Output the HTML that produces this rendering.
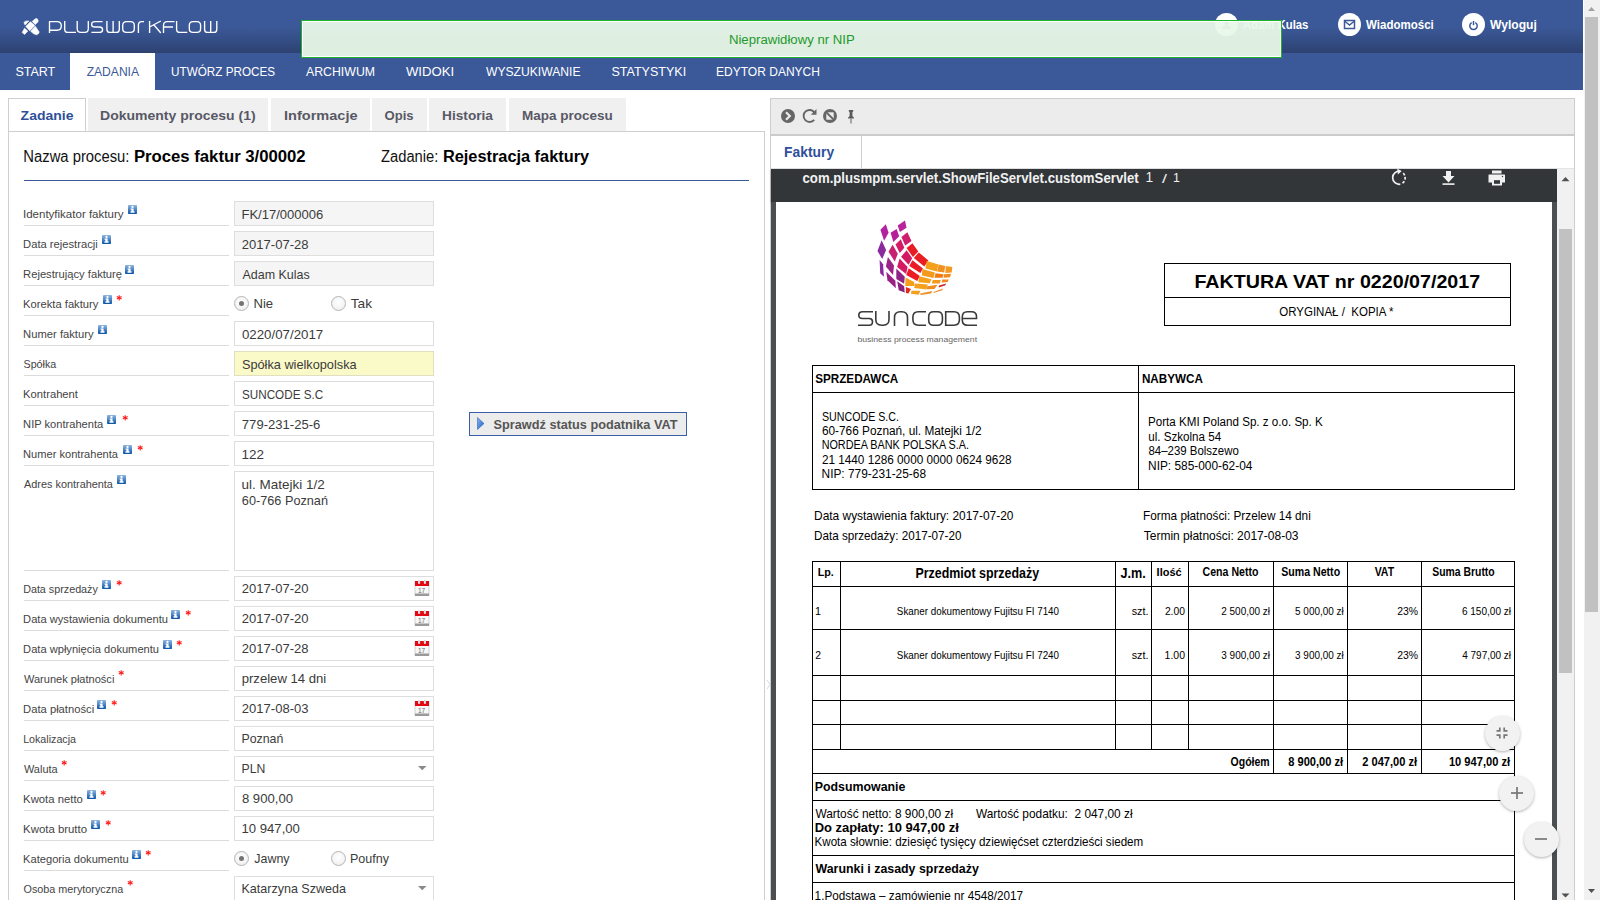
<!DOCTYPE html><html><head><meta charset="utf-8"><title>PlusWorkflow</title>
<style>
html,body{margin:0;padding:0;}
body{width:1600px;height:900px;overflow:hidden;position:relative;background:#fff;font-family:"Liberation Sans",sans-serif;}
.t{position:absolute;white-space:pre;transform-origin:0 0;}
div{box-sizing:border-box;}
svg{position:absolute;overflow:visible;}
text{font-family:"Liberation Sans",sans-serif;}
</style></head><body>

<div style="position:absolute;left:0px;top:0px;width:1583px;height:53px;background:linear-gradient(to bottom,#3b5998 0px,#3b5998 27px,#2d4272 53px);"></div>
<div style="position:absolute;left:0px;top:53px;width:1583px;height:37px;background:#3b5998;"></div>
<div style="position:absolute;left:70px;top:53px;width:85px;height:37px;background:#fff;"></div>
<svg style="left:0;top:0" width="260" height="53">
<g fill="#fff" stroke="#fff" stroke-width="0.6" stroke-linejoin="round">
<path d="M23.9 22.4 L25.5 21.2 L28.8 20.9 L25.1 25.1Z"/>
<path d="M32.2 21.4 L35.3 18.8 L37.1 18.6 L38.2 20.6 L37.9 22.1 L35.2 24.5Z"/>
<path d="M25.8 26.4 L30.4 21.8 L34.9 25.6 L29.8 30.8Z"/>
<path d="M22.2 32.6 L24.5 28.2 L27.8 31.1 L24.6 34.4Z"/>
<path d="M30.7 31.3 L35.3 26.3 L39.2 31.9 L38.5 33.7 L36.5 34.8 L33.6 33.7Z"/>
</g>
<g stroke="#fff" stroke-width="1.35" fill="none" stroke-linecap="butt" stroke-linejoin="round">
<path d="M49.5 33 V21.6 H57 Q61.3 21.6 61.3 25.8 V26 Q61.3 30.2 57 30.2 H49.5"/>
<path d="M64.7 21 V29.2 Q64.7 32.4 68 32.4 H76"/>
<path d="M77.2 21 V28.8 Q77.2 32.4 80.8 32.4 H84.8 Q88.3 32.4 88.3 28.8 V21"/>
<path d="M102.5 21.6 H95 Q91.6 21.6 91.6 24.4 Q91.6 27 95 27 H99.3 Q102.6 27 102.6 29.7 Q102.6 32.4 99.3 32.4 H91.4"/>
<path d="M106.9 21 V29.2 Q106.9 32.4 110 32.4 H116.2 Q119.3 32.4 119.3 29.2 V21 M113.1 21 V32.4"/>
<path d="M126.5 21.6 H130.5 Q134.3 21.6 134.3 25.5 V28.5 Q134.3 32.4 130.5 32.4 H126.5 Q122.7 32.4 122.7 28.5 V25.5 Q122.7 21.6 126.5 21.6Z"/>
<path d="M138.4 33 V25.2 Q138.4 21.6 141.8 21.6 H144"/>
<path d="M149.6 21 V33 M149.6 27 L160.8 21 M153.8 24.8 L160.8 33"/>
<path d="M163.5 33 V25.5 Q163.5 21.6 167.3 21.6 H174.5 M163.5 27 H173"/>
<path d="M176.6 21 V29.2 Q176.6 32.4 180 32.4 H187.3"/>
<path d="M193 21.6 H196.8 Q200.6 21.6 200.6 25.5 V28.5 Q200.6 32.4 196.8 32.4 H193 Q189.3 32.4 189.3 28.5 V25.5 Q189.3 21.6 193 21.6Z"/>
<path d="M204.6 21 V29.2 Q204.6 32.4 207.6 32.4 H213.8 Q216.8 32.4 216.8 29.2 V21 M210.7 21 V32.4"/>
</g></svg>
<svg style="left:0;top:0" width="1" height="1"><text x="15.44" y="76.00" font-size="13" fill="#fff" textLength="39.82" lengthAdjust="spacingAndGlyphs" xml:space="preserve">START</text></svg>
<svg style="left:0;top:0" width="1" height="1"><text x="86.64" y="76.00" font-size="13" fill="#3b5998" textLength="52.41" lengthAdjust="spacingAndGlyphs" xml:space="preserve">ZADANIA</text></svg>
<svg style="left:0;top:0" width="1" height="1"><text x="171.12" y="76.00" font-size="13" fill="#fff" textLength="103.95" lengthAdjust="spacingAndGlyphs" xml:space="preserve">UTWÓRZ PROCES</text></svg>
<svg style="left:0;top:0" width="1" height="1"><text x="306.00" y="76.00" font-size="13" fill="#fff" textLength="69.05" lengthAdjust="spacingAndGlyphs" xml:space="preserve">ARCHIWUM</text></svg>
<svg style="left:0;top:0" width="1" height="1"><text x="405.93" y="76.00" font-size="13" fill="#fff" textLength="48.27" lengthAdjust="spacingAndGlyphs" xml:space="preserve">WIDOKI</text></svg>
<svg style="left:0;top:0" width="1" height="1"><text x="485.94" y="76.00" font-size="13" fill="#fff" textLength="94.56" lengthAdjust="spacingAndGlyphs" xml:space="preserve">WYSZUKIWANIE</text></svg>
<svg style="left:0;top:0" width="1" height="1"><text x="611.44" y="76.00" font-size="13" fill="#fff" textLength="74.74" lengthAdjust="spacingAndGlyphs" xml:space="preserve">STATYSTYKI</text></svg>
<svg style="left:0;top:0" width="1" height="1"><text x="716.04" y="76.00" font-size="13" fill="#fff" textLength="103.92" lengthAdjust="spacingAndGlyphs" xml:space="preserve">EDYTOR DANYCH</text></svg>
<div style="position:absolute;left:1215.0px;top:13.0px;width:23.0px;height:23.0px;border-radius:50%;background:#fff;"></div>
<svg style="left:1214px;top:13px" width="25" height="25"><circle cx="12.5" cy="9.8" r="2.2" fill="#3b5998"/><path d="M8 15.7 Q8.3 12.4 12.5 12.4 Q16.7 12.4 17 15.7Z" fill="#3b5998"/></svg>
<svg style="left:0;top:0" width="1" height="1"><text x="1242.72" y="29.00" font-size="12" fill="#fff" font-weight="bold" textLength="65.73" lengthAdjust="spacingAndGlyphs" xml:space="preserve">Adam Kulas</text></svg>
<div style="position:absolute;left:1338.0px;top:13.0px;width:23.0px;height:23.0px;border-radius:50%;background:#fff;"></div>
<svg style="left:1338px;top:13px" width="23" height="23"><rect x="6.5" y="7.5" width="10" height="8" fill="none" stroke="#3b5998" stroke-width="1.5"/><path d="M6.5 8 L11.5 12 L16.5 8" fill="none" stroke="#3b5998" stroke-width="1.4"/></svg>
<svg style="left:0;top:0" width="1" height="1"><text x="1366.00" y="29.00" font-size="12" fill="#fff" font-weight="bold" textLength="67.76" lengthAdjust="spacingAndGlyphs" xml:space="preserve">Wiadomości</text></svg>
<div style="position:absolute;left:1462.0px;top:13.0px;width:23.0px;height:23.0px;border-radius:50%;background:#fff;"></div>
<svg style="left:1462px;top:13px" width="23" height="23"><path d="M9.7 9.6 A3.7 3.7 0 1 0 13.3 9.6" fill="none" stroke="#3b5998" stroke-width="1.5"/><path d="M11.5 8 V12.2" stroke="#3b5998" stroke-width="1.5"/></svg>
<svg style="left:0;top:0" width="1" height="1"><text x="1490.00" y="29.00" font-size="12" fill="#fff" font-weight="bold" textLength="46.85" lengthAdjust="spacingAndGlyphs" xml:space="preserve">Wyloguj</text></svg>
<div style="position:absolute;left:301px;top:20px;width:981px;height:38px;border:1px solid #1cb52a;background:rgba(232,248,231,0.95);box-shadow:inset 0 0 0 1px #fff;"></div>
<svg style="left:0;top:0" width="1" height="1"><text x="728.95" y="44.00" font-size="12.5" fill="#23992a" textLength="125.76" lengthAdjust="spacingAndGlyphs" xml:space="preserve">Nieprawidłowy nr NIP</text></svg>
<div style="position:absolute;left:1583px;top:0px;width:17px;height:900px;background:#f1f1f1;border-left:1px solid #fff;"></div>
<div style="position:absolute;left:1585px;top:17px;width:13px;height:595px;background:#c1c1c1;"></div>
<svg style="left:1583px;top:0" width="17" height="900"><path d="M5 11 L8.5 7 L12 11Z" fill="#a3a3a3"/><path d="M5 889 L8.5 893 L12 889Z" fill="#505050"/></svg>
<div style="position:absolute;left:8px;top:131px;width:757px;height:800px;border:1px solid #cfcfcf;border-bottom:none;background:#fff;"></div>
<div style="position:absolute;left:8px;top:98px;width:78px;height:33px;background:#fff;border:1px solid #cfcfcf;border-bottom:none;"></div>
<svg style="left:0;top:0" width="1" height="1"><text x="20.58" y="120.00" font-size="13.5" fill="#2f4f9b" font-weight="bold" textLength="52.89" lengthAdjust="spacingAndGlyphs" xml:space="preserve">Zadanie</text></svg>
<div style="position:absolute;left:88px;top:98px;width:180px;height:33px;background:#f0f0f0;"></div>
<svg style="left:0;top:0" width="1" height="1"><text x="100.09" y="120.00" font-size="13.5" fill="#585866" font-weight="bold" textLength="155.59" lengthAdjust="spacingAndGlyphs" xml:space="preserve">Dokumenty procesu (1)</text></svg>
<div style="position:absolute;left:271px;top:98px;width:99px;height:33px;background:#f0f0f0;"></div>
<svg style="left:0;top:0" width="1" height="1"><text x="284.06" y="120.00" font-size="13.5" fill="#585866" font-weight="bold" textLength="73.48" lengthAdjust="spacingAndGlyphs" xml:space="preserve">Informacje</text></svg>
<div style="position:absolute;left:372px;top:98px;width:55px;height:33px;background:#f0f0f0;"></div>
<svg style="left:0;top:0" width="1" height="1"><text x="384.48" y="120.00" font-size="13.5" fill="#585866" font-weight="bold" textLength="29.08" lengthAdjust="spacingAndGlyphs" xml:space="preserve">Opis</text></svg>
<div style="position:absolute;left:429px;top:98px;width:77px;height:33px;background:#f0f0f0;"></div>
<svg style="left:0;top:0" width="1" height="1"><text x="442.11" y="120.00" font-size="13.5" fill="#585866" font-weight="bold" textLength="50.79" lengthAdjust="spacingAndGlyphs" xml:space="preserve">Historia</text></svg>
<div style="position:absolute;left:509px;top:98px;width:117px;height:33px;background:#f0f0f0;"></div>
<svg style="left:0;top:0" width="1" height="1"><text x="522.12" y="120.00" font-size="13.5" fill="#585866" font-weight="bold" textLength="90.74" lengthAdjust="spacingAndGlyphs" xml:space="preserve">Mapa procesu</text></svg>
<svg style="left:0;top:0" width="1" height="1"><text x="23.32" y="162.00" font-size="16" fill="#111" textLength="106.09" lengthAdjust="spacingAndGlyphs" xml:space="preserve">Nazwa procesu:</text></svg>
<svg style="left:0;top:0" width="1" height="1"><text x="133.91" y="162.00" font-size="16" fill="#000" font-weight="bold" textLength="171.74" lengthAdjust="spacingAndGlyphs" xml:space="preserve">Proces faktur 3/00002</text></svg>
<svg style="left:0;top:0" width="1" height="1"><text x="381.06" y="162.00" font-size="16" fill="#111" textLength="57.29" lengthAdjust="spacingAndGlyphs" xml:space="preserve">Zadanie:</text></svg>
<svg style="left:0;top:0" width="1" height="1"><text x="442.94" y="162.00" font-size="16" fill="#000" font-weight="bold" textLength="146.13" lengthAdjust="spacingAndGlyphs" xml:space="preserve">Rejestracja faktury</text></svg>
<div style="position:absolute;left:24px;top:180px;width:725px;height:1px;background:#3b5998;"></div>
<svg style="left:0;top:0" width="1" height="1"><text x="22.96" y="218.00" font-size="11.6" fill="#444" textLength="100.55" lengthAdjust="spacingAndGlyphs" xml:space="preserve">Identyfikator faktury</text></svg>
<svg style="left:128px;top:205px" width="9" height="9"><defs><linearGradient id="ig" x1="0" y1="0" x2="0" y2="1"><stop offset="0" stop-color="#8fb6e2"/><stop offset="1" stop-color="#0b54a6"/></linearGradient></defs><rect width="9" height="9" rx="0.8" fill="url(#ig)"/><circle cx="4.5" cy="2.0" r="1.15" fill="#fff"/><path d="M2.6 3.5 H5.6 V6.3 H6.5 V7.7 H2.5 V6.3 H3.4 V4.7 H2.6Z" fill="#fff"/></svg>
<div style="position:absolute;left:24px;top:225px;width:205px;height:1px;background:#dcdcdc;"></div>
<div style="position:absolute;left:234px;top:201px;width:200px;height:25px;background:#f5f5f5;border:1px solid #dedede;"></div>
<svg style="left:0;top:0" width="1" height="1"><text x="241.46" y="219.00" font-size="13" fill="#3b3b3b" textLength="81.90" lengthAdjust="spacingAndGlyphs" xml:space="preserve">FK/17/000006</text></svg>
<svg style="left:0;top:0" width="1" height="1"><text x="23.10" y="248.00" font-size="11.6" fill="#444" textLength="74.67" lengthAdjust="spacingAndGlyphs" xml:space="preserve">Data rejestracji</text></svg>
<svg style="left:102px;top:235px" width="9" height="9"><defs><linearGradient id="ig" x1="0" y1="0" x2="0" y2="1"><stop offset="0" stop-color="#8fb6e2"/><stop offset="1" stop-color="#0b54a6"/></linearGradient></defs><rect width="9" height="9" rx="0.8" fill="url(#ig)"/><circle cx="4.5" cy="2.0" r="1.15" fill="#fff"/><path d="M2.6 3.5 H5.6 V6.3 H6.5 V7.7 H2.5 V6.3 H3.4 V4.7 H2.6Z" fill="#fff"/></svg>
<div style="position:absolute;left:24px;top:255px;width:205px;height:1px;background:#dcdcdc;"></div>
<div style="position:absolute;left:234px;top:231px;width:200px;height:25px;background:#f5f5f5;border:1px solid #dedede;"></div>
<svg style="left:0;top:0" width="1" height="1"><text x="241.85" y="249.00" font-size="13" fill="#3b3b3b" textLength="66.68" lengthAdjust="spacingAndGlyphs" xml:space="preserve">2017-07-28</text></svg>
<svg style="left:0;top:0" width="1" height="1"><text x="23.10" y="278.00" font-size="11.6" fill="#444" textLength="98.92" lengthAdjust="spacingAndGlyphs" xml:space="preserve">Rejestrujący fakturę</text></svg>
<svg style="left:125px;top:265px" width="9" height="9"><defs><linearGradient id="ig" x1="0" y1="0" x2="0" y2="1"><stop offset="0" stop-color="#8fb6e2"/><stop offset="1" stop-color="#0b54a6"/></linearGradient></defs><rect width="9" height="9" rx="0.8" fill="url(#ig)"/><circle cx="4.5" cy="2.0" r="1.15" fill="#fff"/><path d="M2.6 3.5 H5.6 V6.3 H6.5 V7.7 H2.5 V6.3 H3.4 V4.7 H2.6Z" fill="#fff"/></svg>
<div style="position:absolute;left:24px;top:285px;width:205px;height:1px;background:#dcdcdc;"></div>
<div style="position:absolute;left:234px;top:261px;width:200px;height:25px;background:#f5f5f5;border:1px solid #dedede;"></div>
<svg style="left:0;top:0" width="1" height="1"><text x="242.50" y="279.00" font-size="13" fill="#3b3b3b" textLength="67.26" lengthAdjust="spacingAndGlyphs" xml:space="preserve">Adam Kulas</text></svg>
<svg style="left:0;top:0" width="1" height="1"><text x="23.10" y="308.00" font-size="11.6" fill="#444" textLength="75.30" lengthAdjust="spacingAndGlyphs" xml:space="preserve">Korekta faktury</text></svg>
<svg style="left:103px;top:295px" width="9" height="9"><defs><linearGradient id="ig" x1="0" y1="0" x2="0" y2="1"><stop offset="0" stop-color="#8fb6e2"/><stop offset="1" stop-color="#0b54a6"/></linearGradient></defs><rect width="9" height="9" rx="0.8" fill="url(#ig)"/><circle cx="4.5" cy="2.0" r="1.15" fill="#fff"/><path d="M2.6 3.5 H5.6 V6.3 H6.5 V7.7 H2.5 V6.3 H3.4 V4.7 H2.6Z" fill="#fff"/></svg>
<svg style="left:116px;top:294.5px" width="7" height="7"><g stroke="#ff1a1a" stroke-width="1.1"><path d="M3.2 0.2 V5.4"/><path d="M0.8 1.6 L5.6 4"/><path d="M0.8 4 L5.6 1.6"/></g></svg>
<div style="position:absolute;left:24px;top:315px;width:205px;height:1px;background:#dcdcdc;"></div>
<div style="position:absolute;left:234.0px;top:296.0px;width:15px;height:15px;border-radius:50%;border:1px solid #b5b5b5;background:radial-gradient(circle at 50% 40%,#fff 0%,#f4f4f4 60%,#e6e6e6 100%);"></div>
<div style="position:absolute;left:238.75px;top:300.75px;width:5.5px;height:5.5px;border-radius:50%;background:#747474;"></div>
<div style="position:absolute;left:330.5px;top:296.0px;width:15px;height:15px;border-radius:50%;border:1px solid #b5b5b5;background:radial-gradient(circle at 50% 40%,#fff 0%,#f4f4f4 60%,#e6e6e6 100%);"></div>
<svg style="left:0;top:0" width="1" height="1"><text x="253.45" y="308.00" font-size="13" fill="#3b3b3b" textLength="19.64" lengthAdjust="spacingAndGlyphs" xml:space="preserve">Nie</text></svg>
<svg style="left:0;top:0" width="1" height="1"><text x="350.73" y="308.00" font-size="13" fill="#3b3b3b" textLength="21.29" lengthAdjust="spacingAndGlyphs" xml:space="preserve">Tak</text></svg>
<svg style="left:0;top:0" width="1" height="1"><text x="23.10" y="338.00" font-size="11.6" fill="#444" textLength="70.49" lengthAdjust="spacingAndGlyphs" xml:space="preserve">Numer faktury</text></svg>
<svg style="left:98px;top:325px" width="9" height="9"><defs><linearGradient id="ig" x1="0" y1="0" x2="0" y2="1"><stop offset="0" stop-color="#8fb6e2"/><stop offset="1" stop-color="#0b54a6"/></linearGradient></defs><rect width="9" height="9" rx="0.8" fill="url(#ig)"/><circle cx="4.5" cy="2.0" r="1.15" fill="#fff"/><path d="M2.6 3.5 H5.6 V6.3 H6.5 V7.7 H2.5 V6.3 H3.4 V4.7 H2.6Z" fill="#fff"/></svg>
<div style="position:absolute;left:24px;top:345px;width:205px;height:1px;background:#dcdcdc;"></div>
<div style="position:absolute;left:234px;top:321px;width:200px;height:25px;background:#fff;border:1px solid #dedede;"></div>
<svg style="left:0;top:0" width="1" height="1"><text x="241.97" y="339.00" font-size="13" fill="#3b3b3b" textLength="81.22" lengthAdjust="spacingAndGlyphs" xml:space="preserve">0220/07/2017</text></svg>
<svg style="left:0;top:0" width="1" height="1"><text x="23.52" y="368.00" font-size="11.6" fill="#444" textLength="32.71" lengthAdjust="spacingAndGlyphs" xml:space="preserve">Spółka</text></svg>
<div style="position:absolute;left:24px;top:375px;width:205px;height:1px;background:#dcdcdc;"></div>
<div style="position:absolute;left:234px;top:351px;width:200px;height:25px;background:#fafac8;border:1px solid #e0e0c0;"></div>
<svg style="left:0;top:0" width="1" height="1"><text x="241.93" y="369.00" font-size="13" fill="#3b3b3b" textLength="114.67" lengthAdjust="spacingAndGlyphs" xml:space="preserve">Spółka wielkopolska</text></svg>
<svg style="left:0;top:0" width="1" height="1"><text x="23.10" y="398.00" font-size="11.6" fill="#444" textLength="54.88" lengthAdjust="spacingAndGlyphs" xml:space="preserve">Kontrahent</text></svg>
<div style="position:absolute;left:24px;top:405px;width:205px;height:1px;background:#dcdcdc;"></div>
<div style="position:absolute;left:234px;top:381px;width:200px;height:25px;background:#fff;border:1px solid #dedede;"></div>
<svg style="left:0;top:0" width="1" height="1"><text x="241.97" y="399.00" font-size="13" fill="#3b3b3b" textLength="81.24" lengthAdjust="spacingAndGlyphs" xml:space="preserve">SUNCODE S.C</text></svg>
<svg style="left:0;top:0" width="1" height="1"><text x="23.11" y="428.00" font-size="11.6" fill="#444" textLength="80.07" lengthAdjust="spacingAndGlyphs" xml:space="preserve">NIP kontrahenta</text></svg>
<svg style="left:107px;top:415px" width="9" height="9"><defs><linearGradient id="ig" x1="0" y1="0" x2="0" y2="1"><stop offset="0" stop-color="#8fb6e2"/><stop offset="1" stop-color="#0b54a6"/></linearGradient></defs><rect width="9" height="9" rx="0.8" fill="url(#ig)"/><circle cx="4.5" cy="2.0" r="1.15" fill="#fff"/><path d="M2.6 3.5 H5.6 V6.3 H6.5 V7.7 H2.5 V6.3 H3.4 V4.7 H2.6Z" fill="#fff"/></svg>
<svg style="left:121.5px;top:414.5px" width="7" height="7"><g stroke="#ff1a1a" stroke-width="1.1"><path d="M3.2 0.2 V5.4"/><path d="M0.8 1.6 L5.6 4"/><path d="M0.8 4 L5.6 1.6"/></g></svg>
<div style="position:absolute;left:24px;top:435px;width:205px;height:1px;background:#dcdcdc;"></div>
<div style="position:absolute;left:234px;top:411px;width:200px;height:25px;background:#fff;border:1px solid #dedede;"></div>
<svg style="left:0;top:0" width="1" height="1"><text x="241.85" y="429.00" font-size="13" fill="#3b3b3b" textLength="78.47" lengthAdjust="spacingAndGlyphs" xml:space="preserve">779-231-25-6</text></svg>
<svg style="left:0;top:0" width="1" height="1"><text x="23.11" y="458.00" font-size="11.6" fill="#444" textLength="94.89" lengthAdjust="spacingAndGlyphs" xml:space="preserve">Numer kontrahenta</text></svg>
<svg style="left:122.5px;top:445px" width="9" height="9"><defs><linearGradient id="ig" x1="0" y1="0" x2="0" y2="1"><stop offset="0" stop-color="#8fb6e2"/><stop offset="1" stop-color="#0b54a6"/></linearGradient></defs><rect width="9" height="9" rx="0.8" fill="url(#ig)"/><circle cx="4.5" cy="2.0" r="1.15" fill="#fff"/><path d="M2.6 3.5 H5.6 V6.3 H6.5 V7.7 H2.5 V6.3 H3.4 V4.7 H2.6Z" fill="#fff"/></svg>
<svg style="left:136.5px;top:444.5px" width="7" height="7"><g stroke="#ff1a1a" stroke-width="1.1"><path d="M3.2 0.2 V5.4"/><path d="M0.8 1.6 L5.6 4"/><path d="M0.8 4 L5.6 1.6"/></g></svg>
<div style="position:absolute;left:24px;top:465px;width:205px;height:1px;background:#dcdcdc;"></div>
<div style="position:absolute;left:234px;top:441px;width:200px;height:25px;background:#fff;border:1px solid #dedede;"></div>
<svg style="left:0;top:0" width="1" height="1"><text x="241.49" y="459.00" font-size="13" fill="#3b3b3b" textLength="22.54" lengthAdjust="spacingAndGlyphs" xml:space="preserve">122</text></svg>
<svg style="left:0;top:0" width="1" height="1"><text x="24.00" y="488.00" font-size="11.6" fill="#444" textLength="88.92" lengthAdjust="spacingAndGlyphs" xml:space="preserve">Adres kontrahenta</text></svg>
<svg style="left:117px;top:475px" width="9" height="9"><defs><linearGradient id="ig" x1="0" y1="0" x2="0" y2="1"><stop offset="0" stop-color="#8fb6e2"/><stop offset="1" stop-color="#0b54a6"/></linearGradient></defs><rect width="9" height="9" rx="0.8" fill="url(#ig)"/><circle cx="4.5" cy="2.0" r="1.15" fill="#fff"/><path d="M2.6 3.5 H5.6 V6.3 H6.5 V7.7 H2.5 V6.3 H3.4 V4.7 H2.6Z" fill="#fff"/></svg>
<div style="position:absolute;left:24px;top:570px;width:205px;height:1px;background:#dcdcdc;"></div>
<div style="position:absolute;left:234px;top:471px;width:200px;height:100px;background:#fff;border:1px solid #dedede;"></div>
<svg style="left:0;top:0" width="1" height="1"><text x="241.63" y="489.00" font-size="13" fill="#3b3b3b" textLength="83.04" lengthAdjust="spacingAndGlyphs" xml:space="preserve">ul. Matejki 1/2</text></svg>
<svg style="left:0;top:0" width="1" height="1"><text x="241.87" y="505.00" font-size="13" fill="#3b3b3b" textLength="86.14" lengthAdjust="spacingAndGlyphs" xml:space="preserve">60-766 Poznań</text></svg>
<svg style="left:0;top:0" width="1" height="1"><text x="23.14" y="593.00" font-size="11.6" fill="#444" textLength="74.74" lengthAdjust="spacingAndGlyphs" xml:space="preserve">Data sprzedaży</text></svg>
<svg style="left:102px;top:580px" width="9" height="9"><defs><linearGradient id="ig" x1="0" y1="0" x2="0" y2="1"><stop offset="0" stop-color="#8fb6e2"/><stop offset="1" stop-color="#0b54a6"/></linearGradient></defs><rect width="9" height="9" rx="0.8" fill="url(#ig)"/><circle cx="4.5" cy="2.0" r="1.15" fill="#fff"/><path d="M2.6 3.5 H5.6 V6.3 H6.5 V7.7 H2.5 V6.3 H3.4 V4.7 H2.6Z" fill="#fff"/></svg>
<svg style="left:116px;top:579.5px" width="7" height="7"><g stroke="#ff1a1a" stroke-width="1.1"><path d="M3.2 0.2 V5.4"/><path d="M0.8 1.6 L5.6 4"/><path d="M0.8 4 L5.6 1.6"/></g></svg>
<div style="position:absolute;left:24px;top:600px;width:205px;height:1px;background:#dcdcdc;"></div>
<div style="position:absolute;left:234px;top:576px;width:200px;height:25px;background:#fff;border:1px solid #dedede;"></div>
<svg style="left:0;top:0" width="1" height="1"><text x="241.85" y="593.00" font-size="13" fill="#3b3b3b" textLength="66.61" lengthAdjust="spacingAndGlyphs" xml:space="preserve">2017-07-20</text></svg>
<svg style="left:415px;top:580px" width="14" height="16"><rect x="0" y="1.5" width="14" height="14" fill="#f7f7f7" stroke="#c9c9c9" stroke-width="0.8"/><rect x="0" y="1" width="14" height="5" fill="#e30613"/><rect x="0" y="13.5" width="14" height="2.5" fill="#9a9a9a"/><rect x="3" y="0" width="2.2" height="4" rx="1" fill="#d8d8d8"/><rect x="8.8" y="0" width="2.2" height="4" rx="1" fill="#d8d8d8"/><text x="3" y="12.5" font-family="Liberation Sans" font-size="6.5" fill="#666">17</text></svg>
<svg style="left:0;top:0" width="1" height="1"><text x="23.11" y="623.00" font-size="11.6" fill="#444" textLength="144.94" lengthAdjust="spacingAndGlyphs" xml:space="preserve">Data wystawienia dokumentu</text></svg>
<svg style="left:170.5px;top:610px" width="9" height="9"><defs><linearGradient id="ig" x1="0" y1="0" x2="0" y2="1"><stop offset="0" stop-color="#8fb6e2"/><stop offset="1" stop-color="#0b54a6"/></linearGradient></defs><rect width="9" height="9" rx="0.8" fill="url(#ig)"/><circle cx="4.5" cy="2.0" r="1.15" fill="#fff"/><path d="M2.6 3.5 H5.6 V6.3 H6.5 V7.7 H2.5 V6.3 H3.4 V4.7 H2.6Z" fill="#fff"/></svg>
<svg style="left:184.5px;top:609.5px" width="7" height="7"><g stroke="#ff1a1a" stroke-width="1.1"><path d="M3.2 0.2 V5.4"/><path d="M0.8 1.6 L5.6 4"/><path d="M0.8 4 L5.6 1.6"/></g></svg>
<div style="position:absolute;left:24px;top:630px;width:205px;height:1px;background:#dcdcdc;"></div>
<div style="position:absolute;left:234px;top:606px;width:200px;height:25px;background:#fff;border:1px solid #dedede;"></div>
<svg style="left:0;top:0" width="1" height="1"><text x="241.85" y="623.00" font-size="13" fill="#3b3b3b" textLength="66.61" lengthAdjust="spacingAndGlyphs" xml:space="preserve">2017-07-20</text></svg>
<svg style="left:415px;top:610px" width="14" height="16"><rect x="0" y="1.5" width="14" height="14" fill="#f7f7f7" stroke="#c9c9c9" stroke-width="0.8"/><rect x="0" y="1" width="14" height="5" fill="#e30613"/><rect x="0" y="13.5" width="14" height="2.5" fill="#9a9a9a"/><rect x="3" y="0" width="2.2" height="4" rx="1" fill="#d8d8d8"/><rect x="8.8" y="0" width="2.2" height="4" rx="1" fill="#d8d8d8"/><text x="3" y="12.5" font-family="Liberation Sans" font-size="6.5" fill="#666">17</text></svg>
<svg style="left:0;top:0" width="1" height="1"><text x="23.11" y="653.00" font-size="11.6" fill="#444" textLength="135.90" lengthAdjust="spacingAndGlyphs" xml:space="preserve">Data wpłynięcia dokumentu</text></svg>
<svg style="left:162.5px;top:640px" width="9" height="9"><defs><linearGradient id="ig" x1="0" y1="0" x2="0" y2="1"><stop offset="0" stop-color="#8fb6e2"/><stop offset="1" stop-color="#0b54a6"/></linearGradient></defs><rect width="9" height="9" rx="0.8" fill="url(#ig)"/><circle cx="4.5" cy="2.0" r="1.15" fill="#fff"/><path d="M2.6 3.5 H5.6 V6.3 H6.5 V7.7 H2.5 V6.3 H3.4 V4.7 H2.6Z" fill="#fff"/></svg>
<svg style="left:176.3px;top:639.5px" width="7" height="7"><g stroke="#ff1a1a" stroke-width="1.1"><path d="M3.2 0.2 V5.4"/><path d="M0.8 1.6 L5.6 4"/><path d="M0.8 4 L5.6 1.6"/></g></svg>
<div style="position:absolute;left:24px;top:660px;width:205px;height:1px;background:#dcdcdc;"></div>
<div style="position:absolute;left:234px;top:636px;width:200px;height:25px;background:#fff;border:1px solid #dedede;"></div>
<svg style="left:0;top:0" width="1" height="1"><text x="241.85" y="653.00" font-size="13" fill="#3b3b3b" textLength="66.68" lengthAdjust="spacingAndGlyphs" xml:space="preserve">2017-07-28</text></svg>
<svg style="left:415px;top:640px" width="14" height="16"><rect x="0" y="1.5" width="14" height="14" fill="#f7f7f7" stroke="#c9c9c9" stroke-width="0.8"/><rect x="0" y="1" width="14" height="5" fill="#e30613"/><rect x="0" y="13.5" width="14" height="2.5" fill="#9a9a9a"/><rect x="3" y="0" width="2.2" height="4" rx="1" fill="#d8d8d8"/><rect x="8.8" y="0" width="2.2" height="4" rx="1" fill="#d8d8d8"/><text x="3" y="12.5" font-family="Liberation Sans" font-size="6.5" fill="#666">17</text></svg>
<svg style="left:0;top:0" width="1" height="1"><text x="23.94" y="683.00" font-size="11.6" fill="#444" textLength="90.42" lengthAdjust="spacingAndGlyphs" xml:space="preserve">Warunek płatności</text></svg>
<svg style="left:117.5px;top:669.5px" width="7" height="7"><g stroke="#ff1a1a" stroke-width="1.1"><path d="M3.2 0.2 V5.4"/><path d="M0.8 1.6 L5.6 4"/><path d="M0.8 4 L5.6 1.6"/></g></svg>
<div style="position:absolute;left:24px;top:690px;width:205px;height:1px;background:#dcdcdc;"></div>
<div style="position:absolute;left:234px;top:666px;width:200px;height:25px;background:#fff;border:1px solid #dedede;"></div>
<svg style="left:0;top:0" width="1" height="1"><text x="241.65" y="683.00" font-size="13" fill="#3b3b3b" textLength="84.65" lengthAdjust="spacingAndGlyphs" xml:space="preserve">przelew 14 dni</text></svg>
<svg style="left:0;top:0" width="1" height="1"><text x="23.10" y="713.00" font-size="11.6" fill="#444" textLength="71.05" lengthAdjust="spacingAndGlyphs" xml:space="preserve">Data płatności</text></svg>
<svg style="left:97px;top:700px" width="9" height="9"><defs><linearGradient id="ig" x1="0" y1="0" x2="0" y2="1"><stop offset="0" stop-color="#8fb6e2"/><stop offset="1" stop-color="#0b54a6"/></linearGradient></defs><rect width="9" height="9" rx="0.8" fill="url(#ig)"/><circle cx="4.5" cy="2.0" r="1.15" fill="#fff"/><path d="M2.6 3.5 H5.6 V6.3 H6.5 V7.7 H2.5 V6.3 H3.4 V4.7 H2.6Z" fill="#fff"/></svg>
<svg style="left:111px;top:699.5px" width="7" height="7"><g stroke="#ff1a1a" stroke-width="1.1"><path d="M3.2 0.2 V5.4"/><path d="M0.8 1.6 L5.6 4"/><path d="M0.8 4 L5.6 1.6"/></g></svg>
<div style="position:absolute;left:24px;top:720px;width:205px;height:1px;background:#dcdcdc;"></div>
<div style="position:absolute;left:234px;top:696px;width:200px;height:25px;background:#fff;border:1px solid #dedede;"></div>
<svg style="left:0;top:0" width="1" height="1"><text x="241.85" y="713.00" font-size="13" fill="#3b3b3b" textLength="66.68" lengthAdjust="spacingAndGlyphs" xml:space="preserve">2017-08-03</text></svg>
<svg style="left:415px;top:700px" width="14" height="16"><rect x="0" y="1.5" width="14" height="14" fill="#f7f7f7" stroke="#c9c9c9" stroke-width="0.8"/><rect x="0" y="1" width="14" height="5" fill="#e30613"/><rect x="0" y="13.5" width="14" height="2.5" fill="#9a9a9a"/><rect x="3" y="0" width="2.2" height="4" rx="1" fill="#d8d8d8"/><rect x="8.8" y="0" width="2.2" height="4" rx="1" fill="#d8d8d8"/><text x="3" y="12.5" font-family="Liberation Sans" font-size="6.5" fill="#666">17</text></svg>
<svg style="left:0;top:0" width="1" height="1"><text x="23.14" y="743.00" font-size="11.6" fill="#444" textLength="52.88" lengthAdjust="spacingAndGlyphs" xml:space="preserve">Lokalizacja</text></svg>
<div style="position:absolute;left:24px;top:750px;width:205px;height:1px;background:#dcdcdc;"></div>
<div style="position:absolute;left:234px;top:726px;width:200px;height:25px;background:#fff;border:1px solid #dedede;"></div>
<svg style="left:0;top:0" width="1" height="1"><text x="241.51" y="743.00" font-size="13" fill="#3b3b3b" textLength="41.85" lengthAdjust="spacingAndGlyphs" xml:space="preserve">Poznań</text></svg>
<svg style="left:0;top:0" width="1" height="1"><text x="23.95" y="773.00" font-size="11.6" fill="#444" textLength="33.66" lengthAdjust="spacingAndGlyphs" xml:space="preserve">Waluta</text></svg>
<svg style="left:61.3px;top:759.5px" width="7" height="7"><g stroke="#ff1a1a" stroke-width="1.1"><path d="M3.2 0.2 V5.4"/><path d="M0.8 1.6 L5.6 4"/><path d="M0.8 4 L5.6 1.6"/></g></svg>
<div style="position:absolute;left:24px;top:780px;width:205px;height:1px;background:#dcdcdc;"></div>
<div style="position:absolute;left:234px;top:756px;width:200px;height:25px;background:#fff;border:1px solid #dedede;"></div>
<svg style="left:0;top:0" width="1" height="1"><text x="241.52" y="773.00" font-size="13" fill="#3b3b3b" textLength="23.76" lengthAdjust="spacingAndGlyphs" xml:space="preserve">PLN</text></svg>
<svg style="left:418px;top:766px" width="9" height="5"><path d="M0 0 H8.5 L4.25 4.2Z" fill="#8a8a8a"/></svg>
<svg style="left:0;top:0" width="1" height="1"><text x="23.09" y="803.00" font-size="11.6" fill="#444" textLength="59.77" lengthAdjust="spacingAndGlyphs" xml:space="preserve">Kwota netto</text></svg>
<svg style="left:86.6px;top:790px" width="9" height="9"><defs><linearGradient id="ig" x1="0" y1="0" x2="0" y2="1"><stop offset="0" stop-color="#8fb6e2"/><stop offset="1" stop-color="#0b54a6"/></linearGradient></defs><rect width="9" height="9" rx="0.8" fill="url(#ig)"/><circle cx="4.5" cy="2.0" r="1.15" fill="#fff"/><path d="M2.6 3.5 H5.6 V6.3 H6.5 V7.7 H2.5 V6.3 H3.4 V4.7 H2.6Z" fill="#fff"/></svg>
<svg style="left:100.4px;top:789.5px" width="7" height="7"><g stroke="#ff1a1a" stroke-width="1.1"><path d="M3.2 0.2 V5.4"/><path d="M0.8 1.6 L5.6 4"/><path d="M0.8 4 L5.6 1.6"/></g></svg>
<div style="position:absolute;left:24px;top:810px;width:205px;height:1px;background:#dcdcdc;"></div>
<div style="position:absolute;left:234px;top:786px;width:200px;height:25px;background:#fff;border:1px solid #dedede;"></div>
<svg style="left:0;top:0" width="1" height="1"><text x="241.91" y="803.00" font-size="13" fill="#3b3b3b" textLength="51.08" lengthAdjust="spacingAndGlyphs" xml:space="preserve">8 900,00</text></svg>
<svg style="left:0;top:0" width="1" height="1"><text x="23.09" y="833.00" font-size="11.6" fill="#444" textLength="63.96" lengthAdjust="spacingAndGlyphs" xml:space="preserve">Kwota brutto</text></svg>
<svg style="left:90.5px;top:820px" width="9" height="9"><defs><linearGradient id="ig" x1="0" y1="0" x2="0" y2="1"><stop offset="0" stop-color="#8fb6e2"/><stop offset="1" stop-color="#0b54a6"/></linearGradient></defs><rect width="9" height="9" rx="0.8" fill="url(#ig)"/><circle cx="4.5" cy="2.0" r="1.15" fill="#fff"/><path d="M2.6 3.5 H5.6 V6.3 H6.5 V7.7 H2.5 V6.3 H3.4 V4.7 H2.6Z" fill="#fff"/></svg>
<svg style="left:104.6px;top:819.5px" width="7" height="7"><g stroke="#ff1a1a" stroke-width="1.1"><path d="M3.2 0.2 V5.4"/><path d="M0.8 1.6 L5.6 4"/><path d="M0.8 4 L5.6 1.6"/></g></svg>
<div style="position:absolute;left:24px;top:840px;width:205px;height:1px;background:#dcdcdc;"></div>
<div style="position:absolute;left:234px;top:816px;width:200px;height:25px;background:#fff;border:1px solid #dedede;"></div>
<svg style="left:0;top:0" width="1" height="1"><text x="241.51" y="833.00" font-size="13" fill="#3b3b3b" textLength="58.43" lengthAdjust="spacingAndGlyphs" xml:space="preserve">10 947,00</text></svg>
<svg style="left:0;top:0" width="1" height="1"><text x="23.11" y="863.00" font-size="11.6" fill="#444" textLength="105.63" lengthAdjust="spacingAndGlyphs" xml:space="preserve">Kategoria dokumentu</text></svg>
<svg style="left:131.6px;top:850px" width="9" height="9"><defs><linearGradient id="ig" x1="0" y1="0" x2="0" y2="1"><stop offset="0" stop-color="#8fb6e2"/><stop offset="1" stop-color="#0b54a6"/></linearGradient></defs><rect width="9" height="9" rx="0.8" fill="url(#ig)"/><circle cx="4.5" cy="2.0" r="1.15" fill="#fff"/><path d="M2.6 3.5 H5.6 V6.3 H6.5 V7.7 H2.5 V6.3 H3.4 V4.7 H2.6Z" fill="#fff"/></svg>
<svg style="left:145.4px;top:849.5px" width="7" height="7"><g stroke="#ff1a1a" stroke-width="1.1"><path d="M3.2 0.2 V5.4"/><path d="M0.8 1.6 L5.6 4"/><path d="M0.8 4 L5.6 1.6"/></g></svg>
<div style="position:absolute;left:24px;top:870px;width:205px;height:1px;background:#dcdcdc;"></div>
<div style="position:absolute;left:234.0px;top:851.0px;width:15px;height:15px;border-radius:50%;border:1px solid #b5b5b5;background:radial-gradient(circle at 50% 40%,#fff 0%,#f4f4f4 60%,#e6e6e6 100%);"></div>
<div style="position:absolute;left:238.75px;top:855.75px;width:5.5px;height:5.5px;border-radius:50%;background:#747474;"></div>
<div style="position:absolute;left:330.5px;top:851.0px;width:15px;height:15px;border-radius:50%;border:1px solid #b5b5b5;background:radial-gradient(circle at 50% 40%,#fff 0%,#f4f4f4 60%,#e6e6e6 100%);"></div>
<svg style="left:0;top:0" width="1" height="1"><text x="254.31" y="863.00" font-size="13" fill="#3b3b3b" textLength="35.28" lengthAdjust="spacingAndGlyphs" xml:space="preserve">Jawny</text></svg>
<svg style="left:0;top:0" width="1" height="1"><text x="350.00" y="863.00" font-size="13" fill="#3b3b3b" textLength="38.98" lengthAdjust="spacingAndGlyphs" xml:space="preserve">Poufny</text></svg>
<svg style="left:0;top:0" width="1" height="1"><text x="23.51" y="893.00" font-size="11.6" fill="#444" textLength="99.69" lengthAdjust="spacingAndGlyphs" xml:space="preserve">Osoba merytoryczna</text></svg>
<svg style="left:127.1px;top:879.5px" width="7" height="7"><g stroke="#ff1a1a" stroke-width="1.1"><path d="M3.2 0.2 V5.4"/><path d="M0.8 1.6 L5.6 4"/><path d="M0.8 4 L5.6 1.6"/></g></svg>
<div style="position:absolute;left:24px;top:900px;width:205px;height:1px;background:#dcdcdc;"></div>
<div style="position:absolute;left:234px;top:876px;width:200px;height:25px;background:#fff;border:1px solid #dedede;"></div>
<svg style="left:0;top:0" width="1" height="1"><text x="241.50" y="893.00" font-size="13" fill="#3b3b3b" textLength="104.44" lengthAdjust="spacingAndGlyphs" xml:space="preserve">Katarzyna Szweda</text></svg>
<svg style="left:418px;top:886px" width="9" height="5"><path d="M0 0 H8.5 L4.25 4.2Z" fill="#8a8a8a"/></svg>
<svg style="left:0;top:0" width="1" height="1"><path d="M767 680 L770 684.5 L767 689" fill="none" stroke="#d4d4d4" stroke-width="0.9"/></svg>
<div style="position:absolute;left:469px;top:412px;width:218px;height:24px;background:#ececec;border:1px solid #3b5fa6;"></div>
<svg style="left:476px;top:416px" width="10" height="15"><defs><linearGradient id="tg" x1="0" y1="0" x2="1" y2="1"><stop offset="0" stop-color="#8bb6ea"/><stop offset="1" stop-color="#1b5bc4"/></linearGradient></defs><path d="M1.5 1.5 L8 7.5 L1.5 13.5Z" fill="url(#tg)" stroke="#2a66c8" stroke-width="0.6"/></svg>
<svg style="left:0;top:0" width="1" height="1"><text x="493.62" y="429.00" font-size="13" fill="#555" font-weight="bold" textLength="183.91" lengthAdjust="spacingAndGlyphs" xml:space="preserve">Sprawdź status podatnika VAT</text></svg>
<div style="position:absolute;left:770px;top:98px;width:805px;height:810px;border:1px solid #cdcdcd;border-bottom:none;background:#fff;"></div>
<div style="position:absolute;left:771px;top:99px;width:803px;height:35px;background:#ececec;"></div>
<div style="position:absolute;left:771px;top:134px;width:803px;height:2px;background:#cbcbcb;"></div>
<svg style="left:775px;top:100px" width="90" height="34">
<circle cx="13" cy="16" r="7" fill="#666"/><path d="M11 12.3 L14.8 16 L11 19.7" fill="none" stroke="#ececec" stroke-width="2.2"/>
<path d="M39.2 19.8 A6 6 0 1 1 39.6 12.6" fill="none" stroke="#666" stroke-width="1.9"/><path d="M41.5 9 V14.8 H35.8Z" fill="#666"/>
<circle cx="55" cy="16" r="7" fill="#666"/><rect x="51.3" y="12.3" width="7.4" height="7.4" fill="#ececec"/><path d="M50.5 11.5 L59.5 20.5" stroke="#666" stroke-width="1.8"/>
<path d="M73.8 10 H78.2 V11.5 L77.4 12 V16 L79 17.8 V18.6 H73 V17.8 L74.6 16 V12 L73.8 11.5Z" fill="#5a5a5a"/><path d="M76 18.6 V23.5" stroke="#777" stroke-width="1.2"/>
</svg>
<div style="position:absolute;left:771px;top:136px;width:91px;height:32px;background:#fff;border-right:1px solid #d0d0d0;"></div>
<svg style="left:0;top:0" width="1" height="1"><text x="784.10" y="157.00" font-size="14.2" fill="#2f4f9b" font-weight="bold" textLength="50.00" lengthAdjust="spacingAndGlyphs" xml:space="preserve">Faktury</text></svg>
<div style="position:absolute;left:771px;top:169px;width:803px;height:731px;background:#525659;"></div>
<div style="position:absolute;left:771px;top:168px;width:803px;height:1px;background:#e4e4e4;"></div>
<div style="position:absolute;left:771px;top:169px;width:786px;height:33px;background:#323639;box-shadow:0 1px 2px rgba(0,0,0,0.35);"></div>
<div style="position:absolute;left:776px;top:202px;width:776px;height:698px;background:#fff;"></div>
<div style="position:absolute;left:771px;top:202px;width:5px;height:698px;background:#4b4f52;"></div>
<div style="position:absolute;left:1552px;top:202px;width:5px;height:698px;background:#4b4f52;"></div>
<div style="position:absolute;left:1557px;top:169px;width:17px;height:731px;background:#f1f1f1;"></div>
<div style="position:absolute;left:1559px;top:229px;width:13px;height:444px;background:#c1c1c1;"></div>
<svg style="left:1557px;top:169px" width="17" height="731"><path d="M4.5 12.3 L8.5 8 L12.5 12.3Z" fill="#505050"/><path d="M4.5 724.5 L8.5 728.5 L12.5 724.5Z" fill="#505050"/></svg>
<svg style="left:0;top:0" width="1" height="1"><text x="802.47" y="183.00" font-size="14.2" fill="#f1f1f1" font-weight="bold" textLength="336.20" lengthAdjust="spacingAndGlyphs" xml:space="preserve">com.plusmpm.servlet.ShowFileServlet.customServlet</text></svg>
<svg style="left:0;top:0" width="1" height="1"><text x="1145.47" y="182.00" font-size="14.5" fill="#f1f1f1" textLength="7.67" lengthAdjust="spacingAndGlyphs" xml:space="preserve">1</text></svg>
<svg style="left:0;top:0" width="1" height="1"><text x="1162.00" y="183.00" font-size="12" fill="#f1f1f1" textLength="4.96" lengthAdjust="spacingAndGlyphs" xml:space="preserve">/</text></svg>
<svg style="left:0;top:0" width="1" height="1"><text x="1173.07" y="182.00" font-size="13.5" fill="#f1f1f1" textLength="6.90" lengthAdjust="spacingAndGlyphs" xml:space="preserve">1</text></svg>
<svg style="left:1385px;top:165px" width="130" height="25">
<path d="M15.5 6.2 A6.6 6.6 0 1 0 15.3 19.2" fill="none" stroke="#f1f1f1" stroke-width="1.7"/>
<path d="M12.3 3.5 L16.6 6.3 L12.8 9.6Z" fill="#f1f1f1"/>
<path d="M18.2 8.2 A6.6 6.6 0 0 1 16.5 18.8" fill="none" stroke="#f1f1f1" stroke-width="1.7" stroke-dasharray="2.6 1.7"/>
<path d="M61 6 H66 V11 H69.5 L63.5 17.5 L57.5 11 H61Z" fill="#f1f1f1"/><rect x="57.5" y="18.3" width="12" height="1.6" fill="#f1f1f1"/>
<g transform="translate(-1.5,0)"><rect x="108.5" y="5.5" width="9.5" height="3" fill="#f1f1f1"/>
<path d="M105.5 9.5 H121 Q121.5 9.5 121.5 10 V17.5 H118.5 V20.5 H108.5 V17.5 H105 V10 Q105 9.5 105.5 9.5Z" fill="#f1f1f1"/>
<rect x="110.5" y="15.2" width="6" height="3.6" fill="#323639"/><circle cx="119" cy="11.5" r="0.7" fill="#323639"/></g>
</svg>
<svg style="left:0;top:0" width="1" height="1"><path d="M880.4 229.8 L885.9 224.2 L888.6 232.8 L884.1 240.8Z" fill="#b0229f"/><path d="M890.6 232.8 L896.6 229.1 L899.2 236.3 L893.4 241.9Z" fill="#b41f9a"/><path d="M897.7 225.5 L905.0 220.6 L906.5 227.7 L899.9 231.9Z" fill="#b8249a"/><path d="M901.4 236.9 L907.4 232.3 L911.5 240.9 L905.2 245.5Z" fill="#cf1f6c"/><path d="M877.5 251.0 L881.6 240.2 L886.1 250.0 L882.2 259.0Z" fill="#8a2a9e"/><path d="M888.5 251.7 L892.6 244.7 L897.8 253.7 L894.8 261.5Z" fill="#c81f70"/><path d="M895.5 244.5 L900.8 239.2 L904.3 247.8 L899.8 253.0Z" fill="#d41c66"/><path d="M906.6 248.1 L912.4 243.3 L918.3 251.6 L912.9 257.1Z" fill="#e91c26"/><path d="M913.8 257.9 L918.8 252.4 L928.4 260.4 L924.3 266.5Z" fill="#e81e24"/><path d="M901.1 256.7 L906.6 250.2 L912.2 258.2 L908.6 264.7Z" fill="#d21a62"/><path d="M909.3 265.9 L912.4 260.3 L922.9 268.4 L920.4 272.9Z" fill="#ea1c24"/><path d="M906.2 274.9 L908.7 268.3 L919.8 275.9 L917.3 280.9Z" fill="#ec1c24"/><path d="M879.6 260.1 L883.1 264.2 L883.9 276.7 L880.2 273.2Z" fill="#8a2a9e"/><path d="M885.9 266.5 L887.9 257.0 L894.0 265.5 L893.0 275.0Z" fill="#9c2286"/><path d="M886.3 271.7 L895.4 280.8 L895.8 288.2 L887.4 280.2Z" fill="#9a2285"/><path d="M897.1 266.9 L899.6 258.4 L907.6 266.9 L906.1 274.0Z" fill="#d41a64"/><path d="M896.3 268.6 L904.8 276.7 L904.1 283.7 L896.3 279.1Z" fill="#8e2486"/><path d="M897.2 281.3 L904.2 286.3 L904.7 292.4 L898.7 290.3Z" fill="#8a2380"/><path d="M905.6 277.4 L914.2 281.9 L914.6 286.0 L905.2 286.0Z" fill="#f4a01c"/><path d="M905.9 286.9 L911.0 288.9 L908.4 293.4 L905.9 293.0Z" fill="#e02a1a"/><path d="M919.3 276.2 L931.4 279.2 L929.8 283.2 L918.3 282.2Z" fill="#f5a01a"/><path d="M915.2 283.5 L927.8 284.5 L926.3 289.5 L914.2 288.0Z" fill="#f4a01c"/><path d="M911.5 290.7 L920.5 290.7 L918.5 294.7 L910.9 293.7Z" fill="#f4a01c"/><path d="M926.7 261.0 L938.5 264.5 L936.9 271.5 L925.4 268.4Z" fill="#f5a01a"/><path d="M922.3 269.1 L934.9 272.6 L933.4 278.1 L921.9 275.5Z" fill="#f39a1c"/><path d="M938.7 264.6 L945.2 266.1 L944.2 272.6 L937.2 271.6Z" fill="#f29020"/><path d="M945.8 266.0 L952.3 267.0 L951.7 272.5 L945.3 273.1Z" fill="#f29a20"/><path d="M935.5 273.3 L943.5 274.2 L942.5 277.8 L934.5 277.8Z" fill="#f07a10"/><path d="M943.9 274.2 L951.1 273.8 L950.0 277.3 L943.5 277.8Z" fill="#f28a1c"/><path d="M932.8 280.0 L940.8 280.0 L939.8 283.5 L931.8 283.5Z" fill="#f39a1c"/><path d="M942.3 279.6 L948.7 279.6 L947.7 282.1 L941.7 282.6Z" fill="#f28a20"/><path d="M927.4 286.3 L937.5 284.8 L934.4 288.9 L926.4 289.3Z" fill="#f08a24"/><path d="M939.0 285.6 L946.2 283.6 L945.1 285.6 L938.6 287.5Z" fill="#c8302e"/><path d="M920.1 293.6 L932.1 291.0 L931.2 293.6 L920.6 295.1Z" fill="#f0922a"/><path d="M933.6 291.9 L943.2 288.4 L942.2 290.3 L933.6 292.9Z" fill="#f08a2a"/></svg>
<svg style="left:0;top:0" width="1" height="1">
<g fill="none" stroke="#3a3a3a" stroke-width="1.6">
<path d="M873 311.8 H862.5 Q858.8 311.8 858.8 315.2 Q858.8 318.5 862.5 318.5 H869.3 Q872.5 318.5 872.5 321.8 Q872.5 325.2 869.3 325.2 H858"/>
<path d="M875.8 311 V319.5 Q875.8 325.2 881.5 325.2 H883.2 Q889 325.2 889 319.5 V311"/>
<path d="M894.5 326 V317.5 Q894.5 311.8 900.2 311.8 H901.8 Q907.5 311.8 907.5 317.5 V326"/>
<path d="M926 311.8 H918.3 Q912.9 311.8 912.9 317.2 V319.8 Q912.9 325.2 918.3 325.2 H926"/>
<path d="M933.5 311.8 H937.5 Q942.4 311.8 942.4 316.8 V320.2 Q942.4 325.2 937.5 325.2 H933.5 Q928.7 325.2 928.7 320.2 V316.8 Q928.7 311.8 933.5 311.8Z"/>
<path d="M945.7 311.8 H954 Q959.4 311.8 959.4 317.2 V319.8 Q959.4 325.2 954 325.2 H945.7Z"/>
<path d="M977 325.2 H967.3 Q962.3 325.2 962.3 320 V317 Q962.3 311.8 967.3 311.8 H971.5 Q976.5 311.8 976.5 316.5 V318.5 H962.3"/>
</g></svg>
<svg style="left:0;top:0" width="1" height="1"><text x="857.44" y="341.50" font-size="7.3" fill="#666" textLength="119.61" lengthAdjust="spacingAndGlyphs" xml:space="preserve">business process management</text></svg>
<div style="position:absolute;left:1164px;top:263px;width:347px;height:1px;background:#000;"></div>
<div style="position:absolute;left:1164px;top:297px;width:347px;height:1px;background:#000;"></div>
<div style="position:absolute;left:1164px;top:325px;width:347px;height:1px;background:#000;"></div>
<div style="position:absolute;left:1164px;top:263px;width:1px;height:63px;background:#000;"></div>
<div style="position:absolute;left:1510px;top:263px;width:1px;height:63px;background:#000;"></div>
<svg style="left:0;top:0" width="1" height="1"><text x="1194.42" y="288.00" font-size="18.8" fill="#000" font-weight="bold" textLength="285.71" lengthAdjust="spacingAndGlyphs" xml:space="preserve">FAKTURA VAT nr 0220/07/2017</text></svg>
<svg style="left:0;top:0" width="1" height="1"><text x="1279.28" y="316.00" font-size="12.5" fill="#000" textLength="114.19" lengthAdjust="spacingAndGlyphs" xml:space="preserve">ORYGINAŁ /  KOPIA *</text></svg>
<div style="position:absolute;left:812px;top:365px;width:703px;height:1px;background:#000;"></div>
<div style="position:absolute;left:812px;top:392px;width:703px;height:1px;background:#000;"></div>
<div style="position:absolute;left:812px;top:489px;width:703px;height:1px;background:#000;"></div>
<div style="position:absolute;left:812px;top:365px;width:1px;height:125px;background:#000;"></div>
<div style="position:absolute;left:1514px;top:365px;width:1px;height:125px;background:#000;"></div>
<div style="position:absolute;left:1138px;top:365px;width:1px;height:125px;background:#000;"></div>
<svg style="left:0;top:0" width="1" height="1"><text x="815.15" y="383.00" font-size="12.3" fill="#000" font-weight="bold" textLength="83.16" lengthAdjust="spacingAndGlyphs" xml:space="preserve">SPRZEDAWCA</text></svg>
<svg style="left:0;top:0" width="1" height="1"><text x="1141.94" y="383.00" font-size="12.3" fill="#000" font-weight="bold" textLength="60.87" lengthAdjust="spacingAndGlyphs" xml:space="preserve">NABYWCA</text></svg>
<svg style="left:0;top:0" width="1" height="1"><text x="822.02" y="420.50" font-size="12.3" fill="#000" textLength="76.97" lengthAdjust="spacingAndGlyphs" xml:space="preserve">SUNCODE S.C.</text></svg>
<svg style="left:0;top:0" width="1" height="1"><text x="821.91" y="434.50" font-size="12.3" fill="#000" textLength="159.72" lengthAdjust="spacingAndGlyphs" xml:space="preserve">60-766 Poznań, ul. Matejki 1/2</text></svg>
<svg style="left:0;top:0" width="1" height="1"><text x="821.63" y="448.50" font-size="12.3" fill="#000" textLength="147.35" lengthAdjust="spacingAndGlyphs" xml:space="preserve">NORDEA BANK POLSKA S.A.</text></svg>
<svg style="left:0;top:0" width="1" height="1"><text x="821.91" y="463.50" font-size="12.3" fill="#000" textLength="189.58" lengthAdjust="spacingAndGlyphs" xml:space="preserve">21 1440 1286 0000 0000 0624 9628</text></svg>
<svg style="left:0;top:0" width="1" height="1"><text x="821.55" y="477.50" font-size="12.3" fill="#000" textLength="104.47" lengthAdjust="spacingAndGlyphs" xml:space="preserve">NIP: 779-231-25-68</text></svg>
<svg style="left:0;top:0" width="1" height="1"><text x="1148.07" y="426.00" font-size="12.3" fill="#000" textLength="174.68" lengthAdjust="spacingAndGlyphs" xml:space="preserve">Porta KMI Poland Sp. z o.o. Sp. K</text></svg>
<svg style="left:0;top:0" width="1" height="1"><text x="1148.25" y="441.00" font-size="12.3" fill="#000" textLength="72.92" lengthAdjust="spacingAndGlyphs" xml:space="preserve">ul. Szkolna 54</text></svg>
<svg style="left:0;top:0" width="1" height="1"><text x="1148.49" y="454.50" font-size="12.3" fill="#000" textLength="90.27" lengthAdjust="spacingAndGlyphs" xml:space="preserve">84–239 Bolszewo</text></svg>
<svg style="left:0;top:0" width="1" height="1"><text x="1148.05" y="469.50" font-size="12.3" fill="#000" textLength="104.35" lengthAdjust="spacingAndGlyphs" xml:space="preserve">NIP: 585-000-62-04</text></svg>
<svg style="left:0;top:0" width="1" height="1"><text x="814.05" y="520.00" font-size="12.8" fill="#000" textLength="199.38" lengthAdjust="spacingAndGlyphs" xml:space="preserve">Data wystawienia faktury: 2017-07-20</text></svg>
<svg style="left:0;top:0" width="1" height="1"><text x="814.07" y="540.00" font-size="12.8" fill="#000" textLength="147.33" lengthAdjust="spacingAndGlyphs" xml:space="preserve">Data sprzedaży: 2017-07-20</text></svg>
<svg style="left:0;top:0" width="1" height="1"><text x="1143.06" y="520.00" font-size="12.8" fill="#000" textLength="167.75" lengthAdjust="spacingAndGlyphs" xml:space="preserve">Forma płatności: Przelew 14 dni</text></svg>
<svg style="left:0;top:0" width="1" height="1"><text x="1143.76" y="540.00" font-size="12.8" fill="#000" textLength="154.73" lengthAdjust="spacingAndGlyphs" xml:space="preserve">Termin płatności: 2017-08-03</text></svg>
<div style="position:absolute;left:812px;top:561px;width:703px;height:1px;background:#000;"></div>
<div style="position:absolute;left:812px;top:586px;width:703px;height:1px;background:#000;"></div>
<div style="position:absolute;left:812px;top:629px;width:703px;height:1px;background:#000;"></div>
<div style="position:absolute;left:812px;top:675px;width:703px;height:1px;background:#000;"></div>
<div style="position:absolute;left:812px;top:700px;width:703px;height:1px;background:#000;"></div>
<div style="position:absolute;left:812px;top:724px;width:703px;height:1px;background:#000;"></div>
<div style="position:absolute;left:812px;top:749px;width:703px;height:1px;background:#000;"></div>
<div style="position:absolute;left:812px;top:773px;width:703px;height:1px;background:#000;"></div>
<div style="position:absolute;left:812px;top:561px;width:1px;height:213px;background:#000;"></div>
<div style="position:absolute;left:840px;top:561px;width:1px;height:189px;background:#000;"></div>
<div style="position:absolute;left:1115px;top:561px;width:1px;height:189px;background:#000;"></div>
<div style="position:absolute;left:1151px;top:561px;width:1px;height:189px;background:#000;"></div>
<div style="position:absolute;left:1188px;top:561px;width:1px;height:189px;background:#000;"></div>
<div style="position:absolute;left:1273px;top:561px;width:1px;height:213px;background:#000;"></div>
<div style="position:absolute;left:1347px;top:561px;width:1px;height:213px;background:#000;"></div>
<div style="position:absolute;left:1421px;top:561px;width:1px;height:213px;background:#000;"></div>
<div style="position:absolute;left:1514px;top:561px;width:1px;height:213px;background:#000;"></div>
<svg style="left:0;top:0" width="1" height="1"><text x="817.70" y="576.00" font-size="10.5" fill="#000" font-weight="bold" textLength="16.04" lengthAdjust="spacingAndGlyphs" xml:space="preserve">Lp.</text></svg>
<svg style="left:0;top:0" width="1" height="1"><text x="915.49" y="577.60" font-size="13.9" fill="#000" font-weight="bold" textLength="123.60" lengthAdjust="spacingAndGlyphs" xml:space="preserve">Przedmiot sprzedaży</text></svg>
<svg style="left:0;top:0" width="1" height="1"><text x="1120.51" y="578.00" font-size="13.9" fill="#000" font-weight="bold" textLength="25.32" lengthAdjust="spacingAndGlyphs" xml:space="preserve">J.m.</text></svg>
<svg style="left:0;top:0" width="1" height="1"><text x="1156.59" y="575.50" font-size="10.8" fill="#000" font-weight="bold" textLength="25.03" lengthAdjust="spacingAndGlyphs" xml:space="preserve">Ilość</text></svg>
<svg style="left:0;top:0" width="1" height="1"><text x="1202.58" y="575.60" font-size="11.9" fill="#000" font-weight="bold" textLength="55.83" lengthAdjust="spacingAndGlyphs" xml:space="preserve">Cena Netto</text></svg>
<svg style="left:0;top:0" width="1" height="1"><text x="1281.18" y="575.60" font-size="11.9" fill="#000" font-weight="bold" textLength="58.96" lengthAdjust="spacingAndGlyphs" xml:space="preserve">Suma Netto</text></svg>
<svg style="left:0;top:0" width="1" height="1"><text x="1374.65" y="575.60" font-size="11.9" fill="#000" font-weight="bold" textLength="19.47" lengthAdjust="spacingAndGlyphs" xml:space="preserve">VAT</text></svg>
<svg style="left:0;top:0" width="1" height="1"><text x="1432.19" y="575.60" font-size="11.9" fill="#000" font-weight="bold" textLength="62.53" lengthAdjust="spacingAndGlyphs" xml:space="preserve">Suma Brutto</text></svg>
<svg style="left:0;top:0" width="1" height="1"><text x="814.99" y="615.00" font-size="11" fill="#000" textLength="6.01" lengthAdjust="spacingAndGlyphs" xml:space="preserve">1</text></svg>
<svg style="left:0;top:0" width="1" height="1"><text x="896.86" y="615.00" font-size="11" fill="#000" textLength="162.17" lengthAdjust="spacingAndGlyphs" xml:space="preserve">Skaner dokumentowy Fujitsu FI 7140</text></svg>
<svg style="left:0;top:0" width="1" height="1"><text x="1131.68" y="615.00" font-size="11" fill="#000" textLength="16.80" lengthAdjust="spacingAndGlyphs" xml:space="preserve">szt.</text></svg>
<svg style="left:0;top:0" width="1" height="1"><text x="1164.88" y="615.00" font-size="11" fill="#000" textLength="20.09" lengthAdjust="spacingAndGlyphs" xml:space="preserve">2.00</text></svg>
<svg style="left:0;top:0" width="1" height="1"><text x="1221.20" y="615.00" font-size="11" fill="#000" textLength="48.88" lengthAdjust="spacingAndGlyphs" xml:space="preserve">2 500,00 zł</text></svg>
<svg style="left:0;top:0" width="1" height="1"><text x="1295.10" y="615.00" font-size="11" fill="#000" textLength="48.57" lengthAdjust="spacingAndGlyphs" xml:space="preserve">5 000,00 zł</text></svg>
<svg style="left:0;top:0" width="1" height="1"><text x="1397.18" y="615.00" font-size="11" fill="#000" textLength="20.90" lengthAdjust="spacingAndGlyphs" xml:space="preserve">23%</text></svg>
<svg style="left:0;top:0" width="1" height="1"><text x="1461.90" y="615.00" font-size="11" fill="#000" textLength="49.18" lengthAdjust="spacingAndGlyphs" xml:space="preserve">6 150,00 zł</text></svg>
<svg style="left:0;top:0" width="1" height="1"><text x="815.28" y="659.00" font-size="11" fill="#000" textLength="5.74" lengthAdjust="spacingAndGlyphs" xml:space="preserve">2</text></svg>
<svg style="left:0;top:0" width="1" height="1"><text x="896.86" y="659.00" font-size="11" fill="#000" textLength="162.17" lengthAdjust="spacingAndGlyphs" xml:space="preserve">Skaner dokumentowy Fujitsu FI 7240</text></svg>
<svg style="left:0;top:0" width="1" height="1"><text x="1131.68" y="659.00" font-size="11" fill="#000" textLength="16.80" lengthAdjust="spacingAndGlyphs" xml:space="preserve">szt.</text></svg>
<svg style="left:0;top:0" width="1" height="1"><text x="1164.62" y="659.00" font-size="11" fill="#000" textLength="20.36" lengthAdjust="spacingAndGlyphs" xml:space="preserve">1.00</text></svg>
<svg style="left:0;top:0" width="1" height="1"><text x="1221.30" y="659.00" font-size="11" fill="#000" textLength="48.77" lengthAdjust="spacingAndGlyphs" xml:space="preserve">3 900,00 zł</text></svg>
<svg style="left:0;top:0" width="1" height="1"><text x="1295.10" y="659.00" font-size="11" fill="#000" textLength="48.57" lengthAdjust="spacingAndGlyphs" xml:space="preserve">3 900,00 zł</text></svg>
<svg style="left:0;top:0" width="1" height="1"><text x="1397.18" y="659.00" font-size="11" fill="#000" textLength="20.90" lengthAdjust="spacingAndGlyphs" xml:space="preserve">23%</text></svg>
<svg style="left:0;top:0" width="1" height="1"><text x="1462.20" y="659.00" font-size="11" fill="#000" textLength="48.88" lengthAdjust="spacingAndGlyphs" xml:space="preserve">4 797,00 zł</text></svg>
<svg style="left:0;top:0" width="1" height="1"><text x="1230.58" y="766.00" font-size="12" fill="#000" font-weight="bold" textLength="39.02" lengthAdjust="spacingAndGlyphs" xml:space="preserve">Ogółem</text></svg>
<svg style="left:0;top:0" width="1" height="1"><text x="1288.27" y="766.00" font-size="12" fill="#000" font-weight="bold" textLength="54.82" lengthAdjust="spacingAndGlyphs" xml:space="preserve">8 900,00 zł</text></svg>
<svg style="left:0;top:0" width="1" height="1"><text x="1362.31" y="766.00" font-size="12" fill="#000" font-weight="bold" textLength="54.78" lengthAdjust="spacingAndGlyphs" xml:space="preserve">2 047,00 zł</text></svg>
<svg style="left:0;top:0" width="1" height="1"><text x="1448.93" y="766.00" font-size="12" fill="#000" font-weight="bold" textLength="61.17" lengthAdjust="spacingAndGlyphs" xml:space="preserve">10 947,00 zł</text></svg>
<div style="position:absolute;left:812px;top:800px;width:703px;height:1px;background:#000;"></div>
<div style="position:absolute;left:812px;top:855px;width:703px;height:1px;background:#000;"></div>
<div style="position:absolute;left:812px;top:882px;width:703px;height:1px;background:#000;"></div>
<div style="position:absolute;left:812px;top:773px;width:1px;height:128px;background:#000;"></div>
<div style="position:absolute;left:1514px;top:773px;width:1px;height:128px;background:#000;"></div>
<svg style="left:0;top:0" width="1" height="1"><text x="814.70" y="791.00" font-size="12.7" fill="#000" font-weight="bold" textLength="90.73" lengthAdjust="spacingAndGlyphs" xml:space="preserve">Podsumowanie</text></svg>
<svg style="left:0;top:0" width="1" height="1"><text x="815.44" y="817.50" font-size="12.7" fill="#000" textLength="137.62" lengthAdjust="spacingAndGlyphs" xml:space="preserve">Wartość netto: 8 900,00 zł</text></svg>
<svg style="left:0;top:0" width="1" height="1"><text x="975.94" y="817.50" font-size="12.7" fill="#000" textLength="156.65" lengthAdjust="spacingAndGlyphs" xml:space="preserve">Wartość podatku:  2 047,00 zł</text></svg>
<svg style="left:0;top:0" width="1" height="1"><text x="814.66" y="832.00" font-size="12.7" fill="#000" font-weight="bold" textLength="144.17" lengthAdjust="spacingAndGlyphs" xml:space="preserve">Do zapłaty: 10 947,00 zł</text></svg>
<svg style="left:0;top:0" width="1" height="1"><text x="814.57" y="846.00" font-size="12.7" fill="#000" textLength="328.67" lengthAdjust="spacingAndGlyphs" xml:space="preserve">Kwota słownie: dziesięć tysięcy dziewięćset czterdzieści siedem</text></svg>
<svg style="left:0;top:0" width="1" height="1"><text x="815.50" y="873.00" font-size="12.7" fill="#000" font-weight="bold" textLength="163.31" lengthAdjust="spacingAndGlyphs" xml:space="preserve">Warunki i zasady sprzedaży</text></svg>
<svg style="left:0;top:0" width="1" height="1"><text x="814.62" y="900.00" font-size="12.7" fill="#000" textLength="208.46" lengthAdjust="spacingAndGlyphs" xml:space="preserve">1.Podstawa – zamówienie nr 4548/2017</text></svg>
<div style="position:absolute;left:1484.5px;top:715.5px;width:35px;height:35px;border-radius:50%;background:#f2f2f2;box-shadow:0 1px 3px rgba(0,0,0,0.3);"></div>
<svg style="left:1485px;top:716px" width="34" height="34"><g fill="none" stroke="#777" stroke-width="1.7"><path d="M11.5 14.8 H14.8 V11.5"/><path d="M22.5 14.8 H19.2 V11.5"/><path d="M11.5 19.2 H14.8 V22.5"/><path d="M22.5 19.2 H19.2 V22.5"/></g></svg>
<div style="position:absolute;left:1499.0px;top:775.5px;width:35px;height:35px;border-radius:50%;background:#f2f2f2;box-shadow:0 1px 3px rgba(0,0,0,0.3);"></div>
<svg style="left:1499.5px;top:776px" width="34" height="34"><g stroke="#777" stroke-width="1.7"><path d="M11 17 H23"/><path d="M17 11 V23"/></g></svg>
<div style="position:absolute;left:1523.5px;top:821.5px;width:35px;height:35px;border-radius:50%;background:#f2f2f2;box-shadow:0 1px 3px rgba(0,0,0,0.3);"></div>
<svg style="left:1524px;top:822px" width="34" height="34"><g stroke="#777" stroke-width="1.7"><path d="M11 17 H23"/></g></svg>
</body></html>
